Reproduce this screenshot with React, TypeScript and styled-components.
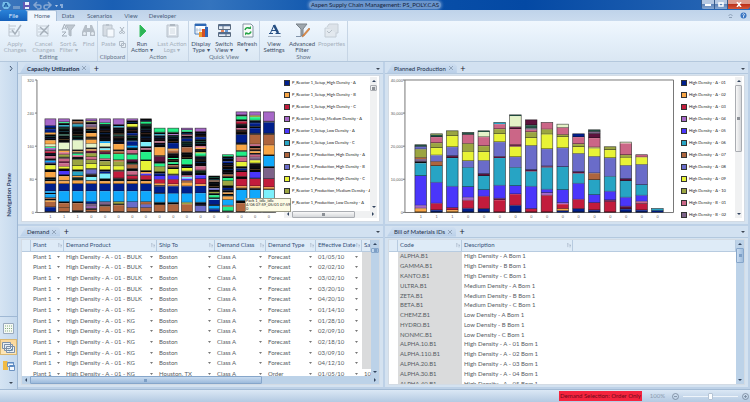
import React from "react";
import styled, { createGlobalStyle, css } from "styled-components";

const GlobalStyle = createGlobalStyle`
  *, *::before, *::after { box-sizing: border-box; }
  body { margin: 0; font: 6px/8px Lato, "Open Sans", sans-serif; color: #3c4654; }
  button { font: inherit; color: inherit; border: 0; background: none; padding: 0; }
  svg { display: block; }
`;

/* ---------- data ---------- */

const palette: Record<string, string> = {
  n: "#001f8c", o: "#f9a646", r: "#c21c3c", p: "#a768c8", b: "#4a36fb", t: "#27a4c4",
  w: "#ae653e", i: "#6a6cc9", y: "#e8f336", g: "#9ba541", k: "#050608", m: "#cb6687",
  v: "#7d6389", d: "#5c123c", c: "#e4f3c8", s: "#10a8fb", e: "#22ee87", a: "#7cf0fb",
  h: "#245546",
};

const capacityBars = [
  "132 p153 n160 k163 n173 k174 o180 k197 o209 c217 e220 p227 k230 r235 k244 m253 k258 s263 n266 k272 y285 k292 o309 k320 o328 n350 s355 k359 s370 w373 k378 o382 w398 n412",
  "132 p142 e145 k151 t157 k178 h183 k204 c225 k228 o233 m240 g248 k252 m262 d266 m276 y283 k289 b301 k305 o318 k320 o328 n350 s382 k386 w400 w412",
  "135 k140 w146 k149 t157 k197 c226 k230 o233 k237 e242 m247 k255 g274 y286 k291 t304 o308 k318 o328 n350 s382 k386 w409 k412",
  "132 p139 g142 k148 v158 w162 k175 o187 k195 o207 c220 k224 o228 d236 g247 m256 g268 y282 k285 i299 k307 a318 k320 o328 n350 s382 n388 v396 p402 k406 w412",
  "132 p144 e148 k200 s205 c217 k221 a226 w232 d239 e252 m256 k260 g274 y286 k291 n297 a313 k320 o328 n350 s382 v392 k396 w412",
  "132 p150 k154 t158 k180 h184 k208 o226 k230 w238 e256 w261 g275 y287 k291 r311 k320 o328 n350 s382 g389 k392 w412",
  "132 p138 k148 y157 k175 n182 k200 n213 s220 k226 m237 k240 e255 d262 k270 w282 k290 m302 k304 r314 k320 o328 n350 s382 i400 w412",
  "132 k141 e148 k202 a216 k221 m225 k232 e256 k259 y288 k292 o297 b303 r316 k320 o328 n350 s382 w390 i400 w412",
  "160 e173 k178 t182 k200 m204 k218 o243 k246 d262 k267 e276 g292 k297 n304 b315 r327 o332 k336 n356 k358 s384 k391 w412",
  "160 e173 k178 p181 k205 n222 o227 w236 k250 e253 k263 e268 k272 w278 k283 y299 k303 b315 r329 o335 n357 s384 k390 w412",
  "160 p166 e171 k180 m183 k192 n200 k218 w234 k254 e270 k280 y290 k303 m307 a312 b318 w324 o335 n357 s384 g389 w412",
  "160 p171 k187 n195 k214 m219 o223 k232 g236 e245 k275 m287 k302 b313 r329 o334 n356 s384 k394 i412",
  "304 k318 w321 k341 i346 k352 g356 k362 e370 k373 a376 n391 k394 s404 n412",
  "240 e246 k260 n265 k300 w306 k310 e319 g334 k340 n347 k354 o358 k366 o376 s393 w397 e410 k412",
  "111 p121 k125 e135 k140 r148 k160 m166 k180 n205 k210 o228 k231 e245 k248 m262 y276 k282 n288 k292 r306 k313 r335 o341 k346 s379 k386 w412",
  "111 p122 g127 e137 k145 n155 k160 n176 k180 w209 m214 k220 w226 k230 o235 k240 m248 v257 y266 k292 b311 k313 r335 o341 k346 s379 k386 w412",
  "111 p140 k143 n176 k180 w212 o241 k244 s276 k280 v313 r338 o344 k346 a376 s390 w412",
];

const productionBars = [
  "252 h258 i266 g291 w295 v304 k308 t346 b435 p444 o455",
  "219 g222 h229 m247 g262 y284 i303 w316 t366 b429 r449 n455",
  "210 g226 y259 i286 d292 t378 b442 r449 o455",
  "215 h222 m249 g273 y301 i321 t379 b411 p420 r444 n455",
  "210 h214 c229 m256 g274 y300 i340 d346 t388 b408 r445 n455",
  "185 t190 m205 g220 y244 i288 d292 t375 b414 d419 r455",
  "162 h166 c199 d205 m253 d258 y289 i321 t376 b401 r435 n455",
  "177 d193 h203 v207 m214 g232 y255 i328 d333 t378 b445 r455",
  "185 m206 g221 y265 i317 d321 t387 b397 p405 r455",
  "190 c201 m222 g229 y262 i319 t388 b427 p431 r445 o451 n455",
  "219 n229 m250 g259 y279 i334 d339 t369 b417 r445 n455",
  "207 h213 v219 d232 m260 g264 y288 i338 w358 t403 b427 r449 n455",
  "258 g268 y292 i348 t393 b419 d424 r455",
  "244 c248 m283 g291 y315 i355 d361 t411 b438 d446 n455",
  "282 m290 y312 i373 t405 b423 m430 r449 n455",
  "444 t451 n455",
];

const capacityLegend: [string, string][] = [
  ["n", "P_Reactor 1_Setup_High Density - A"],
  ["o", "P_Reactor 1_Setup_High Density - B"],
  ["r", "P_Reactor 1_Setup_High Density - C"],
  ["p", "P_Reactor 1_Setup_Medium Density - A"],
  ["b", "P_Reactor 1_Setup_Low Density - A"],
  ["t", "P_Reactor 1_Setup_Low Density - C"],
  ["w", "P_Reactor 1_Production_High Density - A"],
  ["i", "P_Reactor 1_Production_High Density - B"],
  ["y", "P_Reactor 1_Production_High Density - C"],
  ["g", "P_Reactor 1_Production_Medium Density - A"],
  ["m", "P_Reactor 1_Production_Low Density - A"],
];

const productionLegend: [string, string][] = [
  ["n", "High Density - A - 01"], ["o", "High Density - A - 02"], ["r", "High Density - A - 03"],
  ["p", "High Density - A - 04"], ["b", "High Density - A - 05"], ["t", "High Density - A - 06"],
  ["w", "High Density - A - 07"], ["i", "High Density - A - 08"], ["y", "High Density - A - 09"],
  ["g", "High Density - A - 10"], ["m", "High Density - B - 01"], ["v", "High Density - B - 02"],
];

const demandRows = [
  ["BULK", "01/05/10"], ["BULK", "02/02/10"], ["BULK", "03/02/10"], ["BULK", "03/20/10"],
  ["BULK", "04/20/10"], ["KG", "01/14/10"], ["KG", "01/28/10"], ["KG", "02/09/10"],
  ["KG", "02/18/10"], ["KG", "03/09/10"], ["KG", "04/12/10"], ["KG", "01/05/10"],
].map(([unit, date], i) => [
  "Plant 1", `High Density - A - 01 - ${unit}`, i === 11 ? "Houston, TX" : "Boston",
  "Class A", i === 11 ? "Order" : "Forecast", date,
]);

const bomRows = [
  ["ALPHA.B1", "High Density - A Bom 1"], ["GAMMA.B1", "High Density - B Bom 1"],
  ["KANTO.B1", "High Density - C Bom 1"], ["ULTRA.B1", "Medium Density - A Bom 1"],
  ["ZETA.B1", "Medium Density - B Bom 1"], ["BETA.B1", "Medium Density - C Bom 1"],
  ["CHEMZ.B1", "Low Density - A Bom 1"], ["HYDRO.B1", "Low Density - B Bom 1"],
  ["NONMC.B1", "Low Density - C Bom 1"], ["ALPHA.10.B1", "High Density - A - 01 Bom 1"],
  ["ALPHA.110.B1", "High Density - A - 02 Bom 1"], ["ALPHA.20.B1", "High Density - A - 03 Bom 1"],
  ["ALPHA.30.B1", "High Density - A - 04 Bom 1"], ["ALPHA.40.B1", "High Density - A - 05 Bom 1"],
];

/* ---------- shell ---------- */

const Shell = styled.div`
  height: 100vh; display: flex; flex-direction: column; background: #c3d7ec; overflow: hidden;
`;
const TitleBar = styled.header`
  flex: none; height: 10px; display: grid; grid-template-columns: 1fr auto 1fr; align-items: center;
  background: linear-gradient(90deg, #3d76bc 0, #1a5fb4 15%, #3474be 28%, #0c54ac 45%, #0449a4 70%, #2b69b6 100%);
`;
const Title = styled.h1`
  margin: 0; padding: 0 2px; font: inherit; color: #14233b; border-radius: 4px;
  background: rgba(150, 180, 220, 0.7); box-shadow: 0 0 3px 1px rgba(150, 180, 220, 0.6);
`;
const QuickBar = styled.div`display: flex; align-items: center; gap: 4px; padding-left: 2px;`;
const WindowButtons = styled.div`
  justify-self: end; align-self: start; display: flex; height: 9px; border-radius: 0 0 3px 3px; overflow: hidden;
`;
const WindowButton = styled.button<{ $close?: boolean }>`
  width: ${(p) => (p.$close ? 23 : 13)}px; height: 9px; display: grid; place-items: center; border-left: 1px solid #385b8c;
  background: ${(p) => p.$close ? "linear-gradient(#dc9a8c 0 40%, #bd3119 50%, #d3593c)" : "linear-gradient(#b5c8e2 0 40%, #5f84b8 50%, #88a8d2)"};
`;
const RibbonTabs = styled.nav`
  flex: none; height: 11px; display: flex; background: linear-gradient(#bfd3ea, #cadbee); color: #4a607c;
`;
const RibbonTab = styled.button<{ $kind?: "file" | "active"; $w: number }>`
  width: ${(p) => p.$w}px; height: 11px; text-align: center;
  ${(p) => p.$kind === "file" && css`background: linear-gradient(#2a82d8, #1560ba); color: #dcecff; border-radius: 2px 2px 0 0;`}
  ${(p) => p.$kind === "active" && css`background: #eff6fd; border: 1px solid #a8bfd9; border-bottom: 0; border-radius: 2px 2px 0 0;`}
`;
const TabTools = styled.div`margin-left: auto; display: flex; align-items: center; gap: 7px; padding-right: 3px;`;
const Ribbon = styled.div`
  flex: none; height: 41px; display: flex; background: linear-gradient(#f0f7fe, #e4eff9 50%, #dae7f3);
  border-bottom: 1px solid #b4c8dd;
`;
const Group = styled.section`
  display: flex; flex-direction: column; border-right: 1px solid #c6d5e5;
`;
const GroupLabel = styled.div`text-align: center; height: 7px; line-height: 6px; color: #66768a;`;
const GroupItems = styled.div`display: flex; flex: 1;`;
const Tool = styled.button<{ $w: number; $off?: boolean }>`
  width: ${(p) => p.$w}px; padding-top: 2px; display: flex; flex-direction: column; align-items: center; gap: 3px;
  line-height: 6px; color: ${(p) => (p.$off ? "#a6b1bd" : "#3f5068")}; white-space: nowrap;
  svg { width: 15px; height: 15px; ${(p) => p.$off && "opacity: 0.55;"} }
`;
const SmallTools = styled.div`width: 8px; display: flex; flex-direction: column; gap: 7px; padding-top: 6px; opacity: 0.5;`;

const Main = styled.main`flex: 1; min-height: 0; display: grid; grid-template-columns: 18px minmax(0, 1fr);`;
const NavPane = styled.aside`
  display: flex; flex-direction: column; align-items: center; border-right: 1px solid #9fb8d4;
  background: linear-gradient(90deg, #d5e4f3, #c4d8ed);
`;
const NavLabel = styled.div`
  writing-mode: vertical-rl; transform: rotate(180deg); margin-top: auto; margin-bottom: 99px;
  font-weight: 700; color: #33466a; line-height: 10px;
`;
const NavButton = styled.button<{ $on?: boolean }>`
  width: 17px; height: 16px; margin-bottom: 3px; display: grid; place-items: center;
  ${(p) => p.$on && "background: linear-gradient(#fbd79a, #fce7ba); border: 1px solid #d9b873;"}
`;
const NavTop = styled.div`width: 100%; height: 12px; padding: 4px 0 0 9px;`;
const NavRule = styled.div`width: 100%; border-top: 1px solid #9fb8d4; margin-bottom: 3px;`;
const Panels = styled.div`
  min-width: 0; min-height: 0; display: grid; grid-template: minmax(0, 1fr) minmax(0, 1fr) / minmax(0, 367fr) minmax(0, 365fr);
`;
const Panel = styled.section`
  min-width: 0; min-height: 0; display: flex; flex-direction: column; padding-top: 1px;
  border-right: 2px solid #bdd1e7; border-bottom: 2px solid #bdd1e7; background: #d4e2f0;
`;
const TabStrip = styled.div`
  flex: none; height: 11px; display: flex; align-items: end; padding: 0 3px 0 2px;
  background: #d2e1f1; border-bottom: 1px solid #b3c8de;
`;
const DocTab = styled.div`
  height: 10px; display: flex; align-items: center; gap: 3px; padding: 0 4px 0 7px; color: #1d2f49; line-height: 9px;
  background: linear-gradient(#cfdff1, #b9cfe8); clip-path: polygon(6px 0, calc(100% - 3px) 0, 100% 3px, 100% 100%, 0 100%);
`;
const DocTitle = styled.h2<{ $bold?: boolean }>`margin: 0; font: inherit; font-weight: ${(p) => (p.$bold ? 700 : 400)};`;
const TinyButton = styled.button`height: 9px; display: grid; place-items: center;`;
const AddTab = styled(TinyButton)`width: 12px; font-size: 9px; line-height: 8px; color: #223;`;
const StripMenu = styled(TinyButton)`margin-left: auto;`;
const Body = styled.div<{ $col?: boolean }>`
  flex: 1; min-height: 0; margin: 1px 3px 2px; background: #fff; display: flex; border: 1px solid #d3dbe4;
  flex-direction: ${(p) => (p.$col ? "column" : "row")}; overflow: hidden; position: relative;
`;

/* ---------- charts ---------- */

const chartFont = css`font-family: Lato, "Liberation Sans", sans-serif; font-size: 4px;`;
const ChartSvg = styled.svg`flex: 1; min-width: 0; height: 100%; font-family: "Liberation Sans", sans-serif; font-size: 4px;`;
const LegendPane = styled.div<{ $w: number }>`
  flex: none; width: ${(p) => p.$w}px; display: flex; flex-direction: column; padding: 1px 2px 3px 0;
`;
const LegendTop = styled.div`flex: 1; min-height: 0; display: flex;`;
const LegendList = styled.ul`
  flex: 1; min-width: 0; margin: 0; padding: 2px 0 0; list-style: none; overflow: hidden; display: grid; grid-auto-rows: 12px;
  align-content: space-between; ${chartFont} line-height: 8px; color: #222; white-space: nowrap;
`;
const LegendItem = styled.li`display: flex; align-items: center; gap: 2px; height: 8px;`;
const Swatch = styled.span<{ $c: string }>`flex: none; width: 6px; height: 6px; border: 1px solid #333; background: ${(p) => palette[p.$c]};`;
const Tip = styled.div`
  position: absolute; left: 223px; top: 122px; padding: 0; background: #fdfbe4; border: 1px solid #9a9a86;
  ${chartFont} line-height: 4px; color: #222; white-space: nowrap;
`;

const stripes = ["#123a7c", "#1d4f60", "#141a22", "#5e3a2a", "#1f6a4c", "#2b1f33", "#1c2250", "#6f5030"];

function Bar({ spec, x, width, dense }: { spec: string; x: number; width: number; dense?: boolean }) {
  const [first, ...rest] = spec.split(" ");
  let y = Number(first);
  const top = y;
  const parts: React.ReactNode[] = [];
  rest.forEach((s, i) => {
    const end = Number(s.slice(1));
    parts.push(<rect key={s} x={x} y={y} width={width} height={end - y} fill={palette[s[0]]} />);
    if (dense && s[0] === "k") {
      for (let q = y + 4, j = 0; q < end - 3; q += 6 + ((i + j) % 3) * 2, j++) {
        parts.push(<rect key={`${s}-${q}`} x={x} y={q} width={width} height={2} fill={stripes[Math.floor(i * 3 + j * 5 + x) % 8]} />);
      }
    } else if (end - y > 5) {
      parts.push(<rect key={`${s}-l`} x={x} y={end - 2} width={width} height={2} fill="#111" opacity={0.7} />);
    }
    y = end;
  });
  return <g>{parts}<rect x={x} y={top} width={width} height={y - top} fill="none" stroke="#111" strokeWidth={2} opacity={0.75} /></g>;
}

function CapacityChart() {
  const ticks = ["320", "240", "160", "80", "0"];
  return (
    <ChartSvg viewBox="22 75 261 145" preserveAspectRatio="xMinYMin meet" role="img" aria-label="Capacity utilization by period">
      <path d="M37 79V212H277" fill="none" stroke="#777" />
      {ticks.map((t, i) => (
        <g key={t}><path d={`M35 ${79 + i * 33.2}h2`} stroke="#777" /><text x={34} y={81 + i * 33.2} textAnchor="end" fill="#555">{t}</text></g>
      ))}
      <g transform="translate(0 74) scale(.33333)">
        {capacityBars.map((s, i) => <Bar key={i} spec={s} x={135 + i * 41.1} width={33} dense />)}
      </g>
      {capacityBars.map((_, i) => (
        <text key={i} x={50.5 + i * 13.7} y={218} fill="#555" textAnchor="middle">{i < 3 ? "1" : "0"}</text>
      ))}
    </ChartSvg>
  );
}

function ProductionChart() {
  const ticks = ["40,000", "30,000", "20,000", "10,000", "0"];
  return (
    <ChartSvg viewBox="389 75 290 145" preserveAspectRatio="xMinYMin meet" role="img" aria-label="Planned production by period">
      <path d="M405 79H674.5V212H405Z" fill="none" stroke="#777" />
      {ticks.map((t, i) => (
        <g key={t}><path d={`M403 ${79 + i * 33.2}h2`} stroke="#777" /><text x={403} y={81 + i * 33.2} textAnchor="end" fill="#555">{t}</text></g>
      ))}
      <g transform="translate(390 60) scale(.33333)">
        {productionBars.map((s, i) => <Bar key={i} spec={s} x={75 + i * 47.5} width={35} />)}
      </g>
      {productionBars.map((_, i) => (
        <text key={i} x={421 + i * 15.84} y={218} fill="#555" textAnchor="middle">{i < 3 ? "1" : "0"}</text>
      ))}
    </ChartSvg>
  );
}

/* ---------- scroll bars ---------- */

const Track = styled.div<{ $h?: boolean; $blue?: boolean }>`
  flex: none; display: flex; flex-direction: ${(p) => (p.$h ? "row" : "column")}; align-items: stretch;
  ${(p) => (p.$h ? "height" : "width")}: ${(p) => (p.$blue ? 8 : 7)}px;
  background: ${(p) => (p.$blue ? "#bcd2e8" : "#f0f1f2")};
`;
const Arrow = styled.button<{ $h?: boolean }>`
  flex: none; display: grid; place-items: center; color: #33455f; ${(p) => (p.$h ? "width" : "height")}: 8px;
`;
const Rail = styled.div<{ $h?: boolean }>`flex: 1; display: flex; flex-direction: ${(p) => (p.$h ? "row" : "column")};`;
const Thumb = styled.div<{ $size: string; $blue?: boolean; $h?: boolean }>`
  flex: 0 0 ${(p) => p.$size}; display: grid; place-items: center; border-radius: 1px;
  border: 1px solid ${(p) => (p.$blue ? "#86a6ca" : "#aaadb2")};
  background: linear-gradient(${(p) => (p.$h ? "180deg" : "90deg")}, ${(p) => (p.$blue ? "#c9dcf0, #9dbbdc" : "#f8f8f8, #d5d7da")});
  &::after { content: ""; width: 3px; height: 3px; background: ${(p) => (p.$blue ? "#7d9fc6" : "#8c9096")}; }
`;
const Tri = ({ d }: { d: "up" | "down" | "left" | "right" }) => (
  <svg width="4" height="4" viewBox="0 0 4 4" fill="currentColor" aria-hidden>
    <path d={{ up: "M2 1L4 3H0z", down: "M0 1H4L2 3z", left: "M3 0V4L1 2z", right: "M1 0V4L3 2z" }[d]} />
  </svg>
);
function Scroll({ h, blue, size }: { h?: boolean; blue?: boolean; size: string }) {
  return (
    <Track $h={h} $blue={blue}>
      <Arrow $h={h} aria-label={h ? "Scroll left" : "Scroll up"}><Tri d={h ? "left" : "up"} /></Arrow>
      <Rail $h={h}><Thumb $size={size} $blue={blue} $h={h} /></Rail>
      <Arrow $h={h} aria-label={h ? "Scroll right" : "Scroll down"}><Tri d={h ? "right" : "down"} /></Arrow>
    </Track>
  );
}

/* ---------- tables ---------- */

const TableArea = styled.div`flex: 1; min-height: 0; min-width: 0; display: flex;`;
const TableClip = styled.div`flex: 1; min-width: 0; overflow: hidden;`;
const Table = styled.table<{ $h: number }>`
  width: 100%; height: ${(p) => p.$h}px; table-layout: fixed; border-collapse: separate; border-spacing: 0;
  line-height: 8px; color: #565b63; white-space: nowrap;
`;
const Th = styled.th`
  height: 12px; padding: 0 1px 0 2px; font-weight: 400; text-align: left; overflow: hidden; background: #deebf7; color: #34517a;
  border-right: 1px solid #b7cbe0; border-bottom: 1px solid #b7cbe0;
`;
const Td = styled.td<{ $gray?: boolean }>`
  padding: 0 4px 0 2px; overflow: hidden; background: ${(p) => (p.$gray ? "#dadbdc" : "transparent")};
`;
const CellLine = styled.span`display: flex; align-items: center; justify-content: space-between;`;
const DropMark = () => <svg width="3" height="2" viewBox="0 0 3 2" aria-hidden><path d="M0 0H3L1.5 2z" fill="#777" /></svg>;
const SortMark = () => (
  <svg width="4" height="5" viewBox="0 0 5 5" fill="none" stroke="#8e9fb3" strokeWidth=".6" aria-hidden><path d="M1 0V4.5M0 1L1 0 2 1M2.5 2H5L3.8 3.2V5" /></svg>
);

function DemandTable() {
  const heads = ["Plant", "Demand Product", "Ship To", "Demand Class", "Demand Type", "Effective Date"];
  return (
    <Table $h={140}>
      <colgroup>
        <col width="9" /><col width="33" /><col width="93" /><col width="58" /><col width="51" /><col width="50" /><col width="46" /><col />
      </colgroup>
      <thead><tr><Th aria-label="Row" />{heads.map((h) => <Th key={h}><CellLine>{h}<SortMark /></CellLine></Th>)}<Th>Sal</Th></tr></thead>
      <tbody>
        {demandRows.map((r, i) => (
          <tr key={i}><Td />{r.map((c, j) => <Td key={j}><CellLine>{c}<DropMark /></CellLine></Td>)}<Td $gray={i < 11}>{i === 11 ? "10" : ""}</Td></tr>
        ))}
      </tbody>
    </Table>
  );
}

function BomTable() {
  return (
    <Table $h={149}>
      <colgroup><col width="9" /><col width="64" /><col width="111" /><col /></colgroup>
      <thead><tr><Th aria-label="Row" /><Th><CellLine>Code<SortMark /></CellLine></Th><Th><CellLine>Description<SortMark /></CellLine></Th><Th aria-label="Empty" /></tr></thead>
      <tbody>{bomRows.map(([c, d]) => <tr key={c}><Td /><Td $gray>{c}</Td><Td>{d}</Td><Td /></tr>)}</tbody>
    </Table>
  );
}

/* ---------- status bar ---------- */

const StatusBar = styled.footer`
  flex: none; height: 13px; display: flex; align-items: center; justify-content: flex-end; padding-right: 1px;
  background: linear-gradient(#dbe8f5, #b4cae2); border-top: 1px solid #a3bbd5; color: #8b9bb0;
`;
const Alert = styled.div`background: #f4243e; color: #6d0a1c; padding: 0 1px; height: 10px; line-height: 10px; margin-right: 8px; white-space: nowrap;`;
const ZoomButton = styled.button`width: 7px; height: 7px; display: grid; place-items: center; color: #75869b;`;
const ZoomLabel = styled.label`margin-right: 7px;`;
const Slider = styled.input`
  appearance: none; width: 55px; height: 8px; margin: 0 4px; background: linear-gradient(#eef4fa, #eef4fa) center / 100% 1px no-repeat;
  &::-webkit-slider-thumb { appearance: none; width: 5px; height: 7px; background: #fbfdff; border: 1px solid #b4c3d4; border-radius: 1px; }
`;

/* ---------- icons ---------- */

const I = ({ children }: { children: React.ReactNode }) => <svg width="15" height="15" viewBox="0 0 15 15" fill="none" aria-hidden>{children}</svg>;
const icons = {
  apply: <I><path d="M1 3h7M1 6h6M1 9h5M1 1v12h10V8" stroke="#9aa3ad" /><path d="M4 7l3 4 6-9" stroke="#6f7a86" strokeWidth="1.5" /></I>,
  cancel: <I><path d="M2 3h9M2 6h9M2 9h9M1 1v12h11V3" stroke="#a5adb6" /><path d="M4 4l8 7M13 2L4 12" stroke="#6f7a86" strokeWidth="1.4" /></I>,
  sort: <I><path d="M1 7L3.500 1 6 7M2 5h3M1 9h4L1 13h5" stroke="#6f7a86" /><path d="M5 2h9l-4 5v6l-2-1V7z" fill="#9aa3ad" stroke="#7b858f" /></I>,
  find: <I><path d="M4 2h2v3h3V2h2l3 7v4H9V9H6v4H1V9z" fill="#8b949e" /><circle cx="3.500" cy="10.500" r="1.500" fill="#e3e8ed" /><circle cx="11.500" cy="10.500" r="1.500" fill="#e3e8ed" /></I>,
  paste: <I><path d="M2 2h9v11H2z" fill="#c5cbd2" stroke="#8e98a3" /><path d="M5 1h3v2H5z" fill="#8e98a3" /><path d="M6 6h7v8H6z" fill="#fff" stroke="#9aa3ad" /></I>,
  run: <I><path d="M5 2l6 6-6 6z" fill="#2fb457" stroke="#36bf60" strokeLinejoin="round" /></I>,
  logs: <I><path d="M2 2h11v12H2z" fill="#c8ced5" stroke="#939ca7" /><path d="M4 4h7v8H4z" fill="#fff" /><path d="M5 1h5v2H5z" fill="#7d8792" /><path d="M5 6h5M5 8h5M5 10h5" stroke="#a8b0b9" strokeWidth=".7" /></I>,
  display: <I><path d="M1 1h11v10H1z" fill="#fff" stroke="#4a7db8" /><path d="M1 2h11" stroke="#2d68b5" strokeWidth="2" /><path d="M3 5v5M6 5v5M1 7h9" stroke="#9cb4cf" strokeWidth=".7" /><path d="M5 9h3v5H5z" fill="#ef9b2e" /><path d="M8 6h3v8H8z" fill="#d45028" /><path d="M11 4h3v10h-3z" fill="#2f67b9" /></I>,
  switch: <I><path d="M1.500 1.500h12v5h-12zM1.500 9.500h12v4h-12zM6 1.500v5M9 9.500v4" fill="#e6edf5" stroke="#5a6b80" /><path d="M2 2.500h11M2 10.500h11" stroke="#506d92" strokeWidth="1.500" /><path d="M4 8h3" stroke="#e2642c" strokeWidth="1.500" /><path d="M8 8h3" stroke="#3b78c4" strokeWidth="1.500" /></I>,
  refresh: <I><path d="M3 1h8l2 2v11H3z" fill="#f8fbf9" stroke="#8594a2" /><path d="M5 7a3 3 0 015-1.500M11 8.500A3 3 0 016 10" stroke="#27a548" strokeWidth="1.500" /><path d="M11 3v3H8zM5 12.500v-3h3z" fill="#27a548" /></I>,
  view: <I><path d="M3.500 10L7 2" stroke="#264f83" strokeWidth="1" /><path d="M7 2l4 8" stroke="#264f83" strokeWidth="2.500" /><path d="M5 7.500h5M2 10.500h4M8.500 10.500h5" stroke="#264f83" strokeWidth="1" /><path d="M1 13.500h13" stroke="#a6b3c3" /></I>,
  filter: <I><path d="M1 1h11L8 6v6l-2 1V6z" fill="#9ea6ad" stroke="#7a838b" /><path d="M14 5l-6 7-1 2 2-1 6-7z" fill="#ec9042" stroke="#a16033" strokeWidth=".5" /><path d="M1 13.500h5" stroke="#8294aa" /></I>,
  props: <I><path d="M1 5h11v9H1z" fill="#dfe3e7" stroke="#a8b0b8" /><path d="M3 4l2-3h9v9h-2" fill="#d1d6db" stroke="#a8b0b8" /><path d="M3 8l2 2 3-3" stroke="#8c959f" /></I>,
};

const X = () => <svg width="4" height="4" viewBox="0 0 4 4" stroke="#8798ad" strokeWidth=".8" aria-hidden><path d="M0 0l4 4M4 0L0 4" /></svg>;

function Doc({ title, bold, children, col }: { title: string; bold?: boolean; col?: boolean; children: React.ReactNode }) {
  return (
    <Panel>
      <TabStrip>
        <DocTab><DocTitle $bold={bold}>{title}</DocTitle><TinyButton aria-label={`Close ${title}`}><X /></TinyButton></DocTab>
        <AddTab aria-label="Add tab">+</AddTab>
        <StripMenu aria-label="Tab list"><Tri d="down" /></StripMenu>
      </TabStrip>
      <Body $col={col}>{children}</Body>
    </Panel>
  );
}

const Legend = ({ items }: { items: [string, string][] }) => (
  <LegendList>{items.map(([c, t]) => <LegendItem key={t}><Swatch $c={c} />{t}</LegendItem>)}</LegendList>
);

export default function App() {
  return (
    <Shell>
      <GlobalStyle />
      <TitleBar>
        <QuickBar>
          <svg width="62" height="9" viewBox="0 0 62 9" aria-hidden>
            <path d="M1 1h5l3 3-3 4H2L0 5z" fill="#74bce9" /><path d="M2 6l2-4 2 4M3 5h2" stroke="#0e4c96" fill="none" />
            <rect x="11" y="5" width="7" height="3" fill="#a8bdd8" opacity=".5" />
            <path d="M21 1h7v7h-7z" fill="#6459b4" /><path d="M23 1h4v3h-4zM23 6h4v2h-4z" fill="#e8eefa" />
            <g stroke="#a9bfdd" strokeWidth="1.500" fill="none" opacity=".7"><path d="M33 4h4a2 2 0 010 4h-2M35 1l-3 3 3 3M48 4h-4a2 2 0 000 4h2M46 1l3 3-3 3" /></g>
            <path d="M53 4h3l-1.500 2z" fill="#bfd2ea" /><path d="M58 4h3M59 6h2" stroke="#e3edf9" />
          </svg>
        </QuickBar>
        <Title>Aspen Supply Chain Management: PS_POLY.CAS</Title>
        <WindowButtons>
          <WindowButton aria-label="Minimize"><svg width="6" height="2"><rect width="6" height="2" fill="#fff" /></svg></WindowButton>
          <WindowButton aria-label="Restore"><svg width="6" height="5" viewBox="0 0 6 5"><path d="M1 1h4v3H1z" fill="none" stroke="#fff" strokeWidth="1.500" /></svg></WindowButton>
          <WindowButton $close aria-label="Close"><svg width="6" height="5" viewBox="0 0 6 5"><path d="M1 0l4 5M5 0L1 5" stroke="#fff" strokeWidth="1.500" /></svg></WindowButton>
        </WindowButtons>
      </TitleBar>
      <RibbonTabs>
        <RibbonTab $w={27} $kind="file">File</RibbonTab>
        <RibbonTab $w={30} $kind="active">Home</RibbonTab>
        <RibbonTab $w={22}>Data</RibbonTab>
        <RibbonTab $w={41}>Scenarios</RibbonTab>
        <RibbonTab $w={22}>View</RibbonTab>
        <RibbonTab $w={41}>Developer</RibbonTab>
        <TabTools>
          <svg width="5" height="5" viewBox="0 0 5 5" aria-hidden><path d="M.500 3L2.500 1l2 2M1 4.500h3" stroke="#8ca0b8" fill="none" /></svg>
          <svg width="7" height="7" viewBox="0 0 7 7" aria-hidden><circle cx="3.500" cy="3.500" r="3" fill="#3a76c2" /><path d="M2.500 2.500q1-1.500 2 0L3.500 4v1.500" stroke="#fff" fill="none" strokeWidth=".8" /></svg>
        </TabTools>
      </RibbonTabs>
      <Ribbon>
        <Group>
          <GroupItems>
            <Tool $w={30} $off>{icons.apply}<span>Apply<br />Changes</span></Tool>
            <Tool $w={27} $off>{icons.cancel}<span>Cancel<br />Changes</span></Tool>
            <Tool $w={23} $off>{icons.sort}<span>Sort &amp;<br />Filter ▾</span></Tool>
            <Tool $w={17} $off>{icons.find}<span>Find</span></Tool>
          </GroupItems>
          <GroupLabel>Editing</GroupLabel>
        </Group>
        <Group>
          <GroupItems>
            <Tool $w={21} $off>{icons.paste}<span>Paste</span></Tool>
            <SmallTools>
              <button aria-label="Cut"><svg width="6" height="7" viewBox="0 0 6 7" fill="none" stroke="#68737f"><path d="M1 0l3 4M5 0L2 4" /><circle cx="1.500" cy="5.500" r="1" /><circle cx="4.500" cy="5.500" r="1" /></svg></button>
              <button aria-label="Copy"><svg width="7" height="7" viewBox="0 0 7 7" fill="#eef2f6" stroke="#7f8a97"><path d="M.500.500h4v4h-4zM2.500 2.500h4v4h-4z" /></svg></button>
            </SmallTools>
          </GroupItems>
          <GroupLabel>Clipboard</GroupLabel>
        </Group>
        <Group>
          <GroupItems>
            <Tool $w={28}>{icons.run}<span>Run<br />Action ▾</span></Tool>
            <Tool $w={32} $off>{icons.logs}<span>Last Action<br />Logs ▾</span></Tool>
          </GroupItems>
          <GroupLabel>Action</GroupLabel>
        </Group>
        <Group>
          <GroupItems>
            <Tool $w={24}>{icons.display}<span>Display<br />Type ▾</span></Tool>
            <Tool $w={22}>{icons.switch}<span>Switch<br />View ▾</span></Tool>
            <Tool $w={24}>{icons.refresh}<span>Refresh<br />▾</span></Tool>
          </GroupItems>
          <GroupLabel>Quick View</GroupLabel>
        </Group>
        <Group>
          <GroupItems>
            <Tool $w={28}>{icons.view}<span>View<br />Settings</span></Tool>
            <Tool $w={28}>{icons.filter}<span>Advanced<br />Filter</span></Tool>
            <Tool $w={31} $off>{icons.props}<span>Properties</span></Tool>
          </GroupItems>
          <GroupLabel>Show</GroupLabel>
        </Group>
      </Ribbon>
      <Main>
        <NavPane>
          <NavTop><svg width="4" height="5" viewBox="0 0 4 5"><path d="M1 0l2 2.500L1 5" stroke="#3f536f" fill="none" /></svg></NavTop>
          <NavLabel>Navigation Pane</NavLabel>
          <NavRule />
          <NavButton aria-label="Grid view"><svg width="11" height="11" viewBox="0 0 11 11"><path d="M.500.500h10v10H.500z" fill="#f6f9f4" stroke="#9aaabd" /><path d="M2 3h7M2 5.500h7M2 8h7" stroke="#86b081" strokeDasharray="1 1" /></svg></NavButton>
          <NavButton $on aria-label="Workspaces"><svg width="13" height="11" viewBox="0 0 13 11" fill="#e9eff6" stroke="#7d90a8"><path d="M.500.500h8v6h-8zM2.500 2.500h8v6h-8zM4.500 4.500h8v6h-8z" /><path d="M6 8l2 1 3-3" stroke="#58a" fill="none" /></svg></NavButton>
          <NavButton aria-label="Folders"><svg width="12" height="12" viewBox="0 0 12 12"><path d="M0 1h4l1 1v8H0z" fill="#f0bb45" /><path d="M4.500 2.500h6v4h-6zM6.500 5.500h5v5h-5z" fill="#f4f8fc" stroke="#6d93c2" /><path d="M5 3h6M7 6h5" stroke="#4f83c3" /></svg></NavButton>
          <NavTop><Tri d="down" /></NavTop>
        </NavPane>
        <Panels>
          <Doc title="Capacity Utilization" bold>
            <CapacityChart />
            <LegendPane $w={95}>
              <LegendTop><Legend items={capacityLegend} /><Scroll size="6px" /></LegendTop>
              <Scroll h size="82%" />
            </LegendPane>
            <Tip>Pack 1_idle_idle<br />4/06 07:59_05/01 07:59<br />0</Tip>
          </Doc>
          <Doc title="Planned Production">
            <ProductionChart />
            <LegendPane $w={63}><LegendTop><Legend items={productionLegend} /><Scroll size="54%" /></LegendTop></LegendPane>
          </Doc>
          <Doc title="Demand" col>
            <TableArea><TableClip><DemandTable /></TableClip><Scroll blue size="5px" /></TableArea>
            <Scroll h blue size="68%" />
          </Doc>
          <Doc title="Bill of Materials IDs">
            <TableArea><TableClip><BomTable /></TableClip><Scroll blue size="15px" /></TableArea>
          </Doc>
        </Panels>
      </Main>
      <StatusBar>
        <Alert role="status">Demand Selection: Order Only</Alert>
        <ZoomLabel htmlFor="zoom">100%</ZoomLabel>
        <ZoomButton aria-label="Zoom out"><svg width="7" height="7" viewBox="0 0 7 7" fill="none" stroke="currentColor" strokeWidth=".8"><circle cx="3.500" cy="3.500" r="3" /><path d="M2 3.500h3" /></svg></ZoomButton>
        <Slider id="zoom" type="range" defaultValue={50} />
        <ZoomButton aria-label="Zoom in"><svg width="7" height="7" viewBox="0 0 7 7" fill="none" stroke="currentColor" strokeWidth=".8"><circle cx="3.500" cy="3.500" r="3" /><path d="M2 3.500h3M3.500 2v3" /></svg></ZoomButton>
      </StatusBar>
    </Shell>
  );
}
